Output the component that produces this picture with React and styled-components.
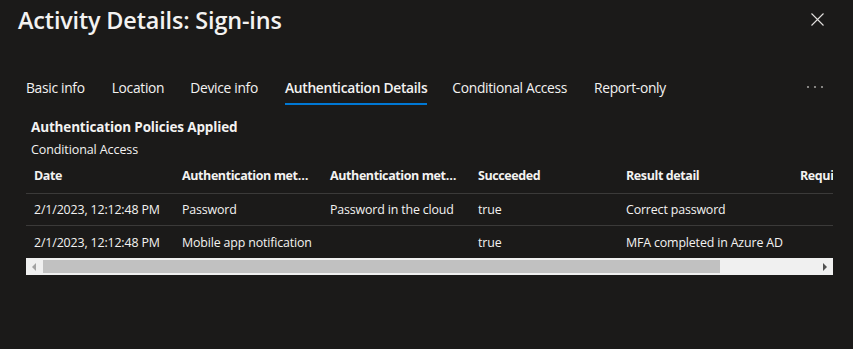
import React from "react";
import styled, { createGlobalStyle } from "styled-components";

const Global = createGlobalStyle`
  html, body { margin: 0; padding: 0; background: #1b1a19; }
  body { font-family: "Segoe UI", "Open Sans", "Noto Sans", sans-serif; color: #f3f2f1; }
  * { box-sizing: border-box; }
`;

const Panel = styled.div`
  width: 853px;
  height: 349px;
  background: #1b1a19;
  overflow: hidden;
`;

const Header = styled.div`
  display: flex;
  align-items: center;
  justify-content: space-between;
  height: 40px;
  padding: 0 29px 0 18px;
`;

const Title = styled.h1`
  margin: 0;
  font-size: 23.4px;
  font-weight: 600;
  color: #f3f2f1;
  letter-spacing: -0.15px;
  line-height: 30px;
  white-space: nowrap;
`;

const IconButton = styled.button`
  background: none;
  border: none;
  padding: 0;
  display: flex;
  align-items: center;
  justify-content: center;
  width: 14px;
  height: 14px;
  margin-top: -2px;
  color: #e1dfdd;
  cursor: pointer;
`;

const TabBar = styled.div`
  display: flex;
  align-items: stretch;
  height: 35px;
  margin-top: 30px;
  padding: 0 26px;
`;

const Tab = styled.div`
  display: flex;
  align-items: center;
  font-size: 13.8px;
  font-weight: ${p => (p.$active ? 600 : 400)};
  color: #f3f2f1;
  margin-right: ${p => p.$gap}px;
  border-bottom: 2px solid ${p => (p.$active ? "#0078d4" : "transparent")};
  padding-top: 2px;
  white-space: nowrap;
  letter-spacing: -0.3px;
`;

const More = styled.div`
  margin-left: auto;
  margin-right: 3px;
  display: flex;
  align-items: center;
  padding-bottom: 1px;
  color: #a19f9d;
`;

const Content = styled.div`
  padding: 11px 20px 0 26px;
`;

const SectionTitle = styled.div`
  font-size: 13.5px;
  font-weight: 700;
  line-height: 22px;
  padding-left: 5px;
  letter-spacing: -0.15px;
`;

const SubTitle = styled.div`
  font-size: 12.5px;
  line-height: 24px;
  padding-left: 5px;
  letter-spacing: -0.1px;
`;

const TableWrap = styled.div`
  width: 807px;
  overflow: hidden;
`;

const Row = styled.div`
  display: grid;
  grid-template-columns: 148px 148px 148px 148px 174px 200px;
  height: 32px;
  padding-bottom: ${p => (p.$head ? 4 : 0)}px;
  align-items: center;
  border-bottom: ${p => (p.$last ? "none" : "1px solid #3b3a39")};
  width: 966px;
`;

const HeadCell = styled.div`
  padding: 0 12px 0 8px;
  font-size: 12.5px;
  font-weight: 700;
  white-space: nowrap;
  overflow: hidden;
  text-overflow: ellipsis;
  letter-spacing: -0.4px;
  color: #f3f2f1;
`;

const Cell = styled.div`
  padding: 0 2px 0 8px;
  font-size: 12.4px;
  white-space: nowrap;
  letter-spacing: -0.15px;
  color: #f3f2f1;
`;

const Scrollbar = styled.div`
  display: flex;
  align-items: stretch;
  width: 807px;
  height: 17px;
  background: #f0f0f0;
`;

const ScrollBtn = styled.div`
  width: 17px;
  display: flex;
  align-items: center;
  justify-content: center;
`;

const Track = styled.div`
  flex: 1;
  display: flex;
  align-items: center;
`;

const Thumb = styled.div`
  height: 13px;
  background: #c1c1c1;
`;

const tabs = [
  ["Basic info", 0, 27],
  ["Location", 0, 26],
  ["Device info", 0, 27],
  ["Authentication Details", 1, 25],
  ["Conditional Access", 0, 27],
  ["Report-only", 0, 0],
];

const cols = ["Date", "Authentication method", "Authentication method detail", "Succeeded", "Result detail", "Requirement"];
const rows = [
  ["2/1/2023, 12:12:48 PM", "Password", "Password in the cloud", "true", "Correct password", ""],
  ["2/1/2023, 12:12:48 PM", "Mobile app notification", "", "true", "MFA completed in Azure AD", ""],
];

export default function App() {
  return (
    <Panel>
      <Global />
      <Header>
        <Title>Activity Details: Sign-ins</Title>
        <IconButton aria-label="Close">
          <svg width="13" height="13" viewBox="0 0 13 13">
            <path d="M0.5 0.5 L12.5 12.5 M12.5 0.5 L0.5 12.5" stroke="#e1dfdd" strokeWidth="1.1" />
          </svg>
        </IconButton>
      </Header>
      <TabBar>
        {tabs.map(([t, a, g]) => (
          <Tab key={t} $active={!!a} $gap={g}>{t}</Tab>
        ))}
        <More>
          <svg width="18" height="4" viewBox="0 0 18 4">
            <circle cx="2" cy="2" r="1.1" fill="#a19f9d" />
            <circle cx="9" cy="2" r="1.1" fill="#a19f9d" />
            <circle cx="16" cy="2" r="1.1" fill="#a19f9d" />
          </svg>
        </More>
      </TabBar>
      <Content>
        <SectionTitle>Authentication Policies Applied</SectionTitle>
        <SubTitle>Conditional Access</SubTitle>
        <TableWrap>
          <Row $head>
            {cols.map(c => (
              <HeadCell key={c}>{c}</HeadCell>
            ))}
          </Row>
          {rows.map((r, i) => (
            <Row key={i} $last={i === rows.length - 1}>
              {r.map((c, j) => (
                <Cell key={j}>{c}</Cell>
              ))}
            </Row>
          ))}
        </TableWrap>
        <Scrollbar>
          <ScrollBtn>
            <svg width="5" height="8" viewBox="0 0 5 8"><path d="M4 0 L0 4 L4 8 Z" fill="#a3a3a3" /></svg>
          </ScrollBtn>
          <Track>
            <Thumb style={{ width: "677px" }} />
          </Track>
          <ScrollBtn>
            <svg width="5" height="8" viewBox="0 0 5 8"><path d="M1 0 L5 4 L1 8 Z" fill="#505050" /></svg>
          </ScrollBtn>
        </Scrollbar>
      </Content>
    </Panel>
  );
}
